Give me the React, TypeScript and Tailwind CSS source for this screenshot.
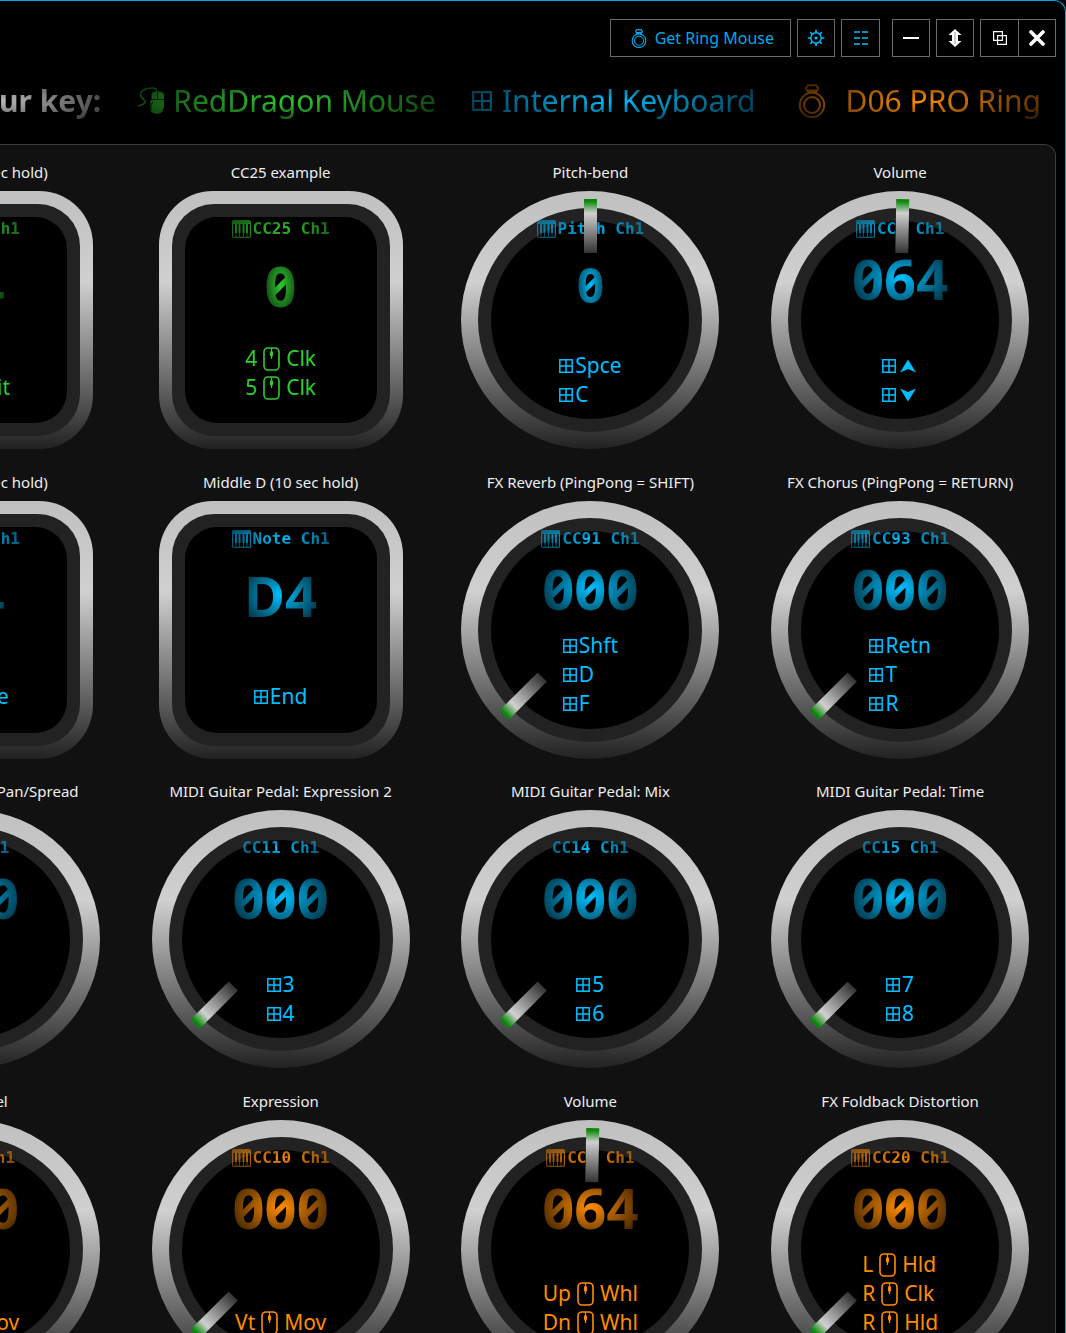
import type { ReactNode } from 'react';
import clsx from 'clsx';

type Tone = 'green' | 'blue' | 'orange';

type Binding = { device: 'key'; text: string } | { device: 'mouse'; button: string; text: string } | { device: 'arrow'; dir: 'up' | 'down' };

type Control = {
  title: string;
  shape: 'knob' | 'pad';
  tone: Tone;
  piano?: boolean;
  label: string;
  value: string;
  small?: boolean;
  angle?: number;
  bindings: Binding[];
};

const TONES: Record<Tone, string> = {
  green: 'text-[#2fcb2f]',
  blue: 'text-[#00bfff]',
  orange: 'text-[#ff8c00]',
};

const key = (text: string): Binding => ({ device: 'key', text });
const mouse = (button: string, text: string): Binding => ({ device: 'mouse', button, text });

const CONTROLS: Control[] = [
  { title: 'Middle C (10 sec hold)', shape: 'pad', tone: 'green', piano: true, label: 'Note Ch1', value: 'C4', bindings: [mouse('Rt', 'Hit')] },
  { title: 'CC25 example', shape: 'pad', tone: 'green', piano: true, label: 'CC25 Ch1', value: '0', bindings: [mouse('4', 'Clk'), mouse('5', 'Clk')] },
  { title: 'Pitch-bend', shape: 'knob', tone: 'blue', piano: true, label: 'Pitch Ch1', value: '0', small: true, angle: 0, bindings: [key('Spce'), key('C')] },
  { title: 'Volume', shape: 'knob', tone: 'blue', piano: true, label: 'CC7 Ch1', value: '064', bindings: [{ device: 'arrow', dir: 'up' }, { device: 'arrow', dir: 'down' }] },

  { title: 'Middle C (10 sec hold)', shape: 'pad', tone: 'blue', piano: true, label: 'Note Ch1', value: 'C4', bindings: [key('Home')] },
  { title: 'Middle D (10 sec hold)', shape: 'pad', tone: 'blue', piano: true, label: 'Note Ch1', value: 'D4', bindings: [key('End')] },
  { title: 'FX Reverb (PingPong = SHIFT)', shape: 'knob', tone: 'blue', piano: true, label: 'CC91 Ch1', value: '000', bindings: [key('Shft'), key('D'), key('F')] },
  { title: 'FX Chorus (PingPong = RETURN)', shape: 'knob', tone: 'blue', piano: true, label: 'CC93 Ch1', value: '000', bindings: [key('Retn'), key('T'), key('R')] },

  { title: 'MIDI Guitar Pedal: Pan/Spread', shape: 'knob', tone: 'blue', label: 'CC10 Ch1', value: '000', bindings: [key('1'), key('2')] },
  { title: 'MIDI Guitar Pedal: Expression 2', shape: 'knob', tone: 'blue', label: 'CC11 Ch1', value: '000', bindings: [key('3'), key('4')] },
  { title: 'MIDI Guitar Pedal: Mix', shape: 'knob', tone: 'blue', label: 'CC14 Ch1', value: '000', bindings: [key('5'), key('6')] },
  { title: 'MIDI Guitar Pedal: Time', shape: 'knob', tone: 'blue', label: 'CC15 Ch1', value: '000', bindings: [key('7'), key('8')] },

  { title: 'Modwheel', shape: 'knob', tone: 'orange', piano: true, label: 'CC1 Ch1', value: '000', bindings: [mouse('Hz', 'Mov')] },
  { title: 'Expression', shape: 'knob', tone: 'orange', piano: true, label: 'CC10 Ch1', value: '000', bindings: [mouse('Vt', 'Mov')] },
  { title: 'Volume', shape: 'knob', tone: 'orange', piano: true, label: 'CC7 Ch1', value: '064', bindings: [mouse('Up', 'Whl'), mouse('Dn', 'Whl')] },
  { title: 'FX Foldback Distortion', shape: 'knob', tone: 'orange', piano: true, label: 'CC20 Ch1', value: '000', bindings: [mouse('L', 'Hld'), mouse('R', 'Clk'), mouse('R', 'Hld')] },
];

const RingIcon = ({ className }: { className?: string }) => (
  <svg viewBox="0 0 28 34" fill="none" stroke="currentColor" strokeWidth="2" className={className}>
    <circle cx="14" cy="21" r="12.2" />
    <circle cx="14" cy="21" r="8" />
    <path d="M10 9.5V7.5h8v2" />
    <path d="M9 6.5 7.8 4.2 10 1.2h8l2.2 3L19 6.5z" />
  </svg>
);

const GridIcon = ({ className }: { className?: string }) => (
  <svg viewBox="0 0 14 14" fill="none" stroke="currentColor" strokeWidth="1.5" className={className}>
    <path d="M.8.8h12.4v12.4H.8zM7 .8v12.4M.8 7h12.4" />
  </svg>
);

const PianoIcon = () => (
  <svg viewBox="0 0 19 18" className="h-[18px] w-[19px]">
    <rect x=".6" y=".6" width="17.8" height="16.8" rx="1" fill="none" stroke="currentColor" strokeWidth="1.2" />
    <path d="M1 1h17v3H1z" fill="currentColor" />
    <path d="M4 3v10M7.5 3v10M11.5 3v10M15 3v10" stroke="currentColor" strokeWidth="2" />
    <path d="M4 12v5M7.5 12v5M11.5 12v5M15 12v5" stroke="currentColor" strokeWidth=".8" />
  </svg>
);

const MouseIcon = () => (
  <svg viewBox="0 0 17 24" fill="none" stroke="currentColor" className="h-6 w-[17px]">
    <rect x="1" y="1" width="15" height="22" rx="4" strokeWidth="1.6" />
    <path d="M8.5 1v11" strokeWidth="1.2" />
    <path d="M8.5 3.5c2 1 2 4.500.8 6.200h-1.600c-1.200-1.700-1.200-5.200.8-6.200z" fill="currentColor" stroke="none" />
  </svg>
);

const WiredMouseIcon = () => (
  <svg viewBox="0 0 28 28" className="size-7">
    <path d="M1 19c4-1 8-3 7-5S3 11 3.500 7 11 1 15 1s5 1.500 5 4" fill="none" stroke="currentColor" strokeWidth="1.4" />
    <path d="M14.500 12V8c0-2 1.500-3.500 4-3.500h1.800V12zM21 12V4.500h1.500c2.500 0 4 1.500 4.500 3.500v4zM13.500 12.700H27V18c0 5-2.500 9-6.500 9-5 0-8.500-3-7.500-8z" fill="currentColor" />
    <path d="M16 15c-2 2-3 5-1.500 8" fill="none" stroke="#000" strokeWidth="1" />
  </svg>
);

const ArrowHead = ({ dir }: { dir: 'up' | 'down' }) => (
  <svg viewBox="0 0 16 14" className={clsx('mx-0.5 h-[14px] w-4', dir === 'down' && 'rotate-180')}>
    <path d="M8 .5 16 13.500 8 10 0 13.500z" fill="currentColor" />
  </svg>
);

const BindingLine = ({ binding }: { binding: Binding }) => {
  if (binding.device === 'mouse') {
    return (
      <li className="flex h-[29px] items-center gap-1.5">
        {binding.button}
        <MouseIcon />
        {binding.text}
      </li>
    );
  }
  return (
    <li className="flex h-[29px] items-center gap-0.5">
      <GridIcon className="size-[14px]" />
      {binding.device === 'arrow' ? <ArrowHead dir={binding.dir} /> : binding.text}
    </li>
  );
};

const Pointer = ({ angle }: { angle: number }) => (
  <div className="absolute inset-0 flex items-start justify-center pt-2" style={{ transform: `rotate(${angle}deg)` }}>
    <div className="h-[54px] w-[13px] bg-[linear-gradient(#0a870a_4%,#d0d0d0_26%,#333_100%)]" />
  </div>
);

const ControlCell = ({ control }: { control: Control }) => {
  const { title, shape, tone, piano, label, value, small, bindings } = control;
  const knob = shape === 'knob';
  const angle = control.angle ?? -135 + (Number(value) / 127) * 270;

  return (
    <section className="flex flex-col items-center">
      <h2 className="h-[31px] text-[15px] leading-6 whitespace-nowrap text-[#eee]">{title}</h2>
      <div
        className={clsx(
          'relative h-[258px] bg-[linear-gradient(#c0c0c0,#d0d0d0_35%,#222)]',
          knob ? 'w-[258px] rounded-full p-[17px]' : 'w-[244px] rounded-[54px] p-[13px]',
        )}
      >
        <div className={clsx('h-full bg-[#222] p-[13px]', knob ? 'rounded-full' : 'rounded-[42px]')}>
          <div className={clsx('h-full bg-black', knob ? 'rounded-full' : 'rounded-[32px]')} />
        </div>

        <div className={clsx('absolute inset-0 flex flex-col items-center pt-7', knob ? 'pb-10' : 'pb-[47px]', TONES[tone])}>
          <div className="flex h-5 items-center gap-0.5 font-['DejaVu_Sans_Mono',monospace] text-base font-bold whitespace-nowrap [mask-image:radial-gradient(ellipse,#000,rgb(0_0_0/0.35))]">
            {piano && <PianoIcon />}
            {label}
          </div>
          <div
            className={clsx(
              'font-bold slashed-zero [mask-image:radial-gradient(ellipse,#000,rgb(0_0_0/0.1))]',
              small ? 'text-5xl leading-[60px]' : 'text-[56px] leading-[60px]',
              knob && !small ? 'mt-[9px]' : 'mt-4',
            )}
          >
            {value}
          </div>
          <ul className="mt-auto text-[21px]">
            {bindings.map((binding, i) => (
              <BindingLine key={i} binding={binding} />
            ))}
          </ul>
        </div>

        {knob && <Pointer angle={angle} />}
      </div>
    </section>
  );
};

const ToolButton = ({ label, className, children }: { label?: string; className?: string; children: ReactNode }) => (
  <button
    type="button"
    aria-label={label}
    className={clsx('flex h-[38px] items-center justify-center border border-[#6b6b6b] bg-black', className)}
  >
    {children}
  </button>
);

const Toolbar = () => (
  <div className="flex justify-end pr-[9px]">
    <ToolButton className="mr-1.5 gap-2 pr-4 pl-5 text-base text-[#00a8e8]">
      <RingIcon className="h-[19px] w-4" />
      Get Ring Mouse
    </ToolButton>
    <ToolButton label="Settings" className="mr-1.5 w-[38px] text-[#00bfff]">
      <svg viewBox="0 0 18 18" fill="none" stroke="currentColor" className="size-[18px]">
        <circle cx="9" cy="9" r="5.2" strokeWidth="1.4" />
        <circle cx="9" cy="9" r="1.6" fill="currentColor" stroke="none" />
        <path d="M9 .8v3M9 14.2v3M.8 9h3M14.2 9h3M3.200 3.200l2 2M12.800 12.800l2 2M3.200 14.800l2-2M12.800 5.200l2-2" strokeWidth="1.6" />
      </svg>
    </ToolButton>
    <ToolButton label="List" className="mr-3 w-[39px] text-[#00bfff]">
      <svg viewBox="0 0 14 14" stroke="currentColor" strokeWidth="1.6" className="size-[14px]">
        <path d="M0 1h6M8 1h6M0 7h6M8 7h6M0 13h6M8 13h6" />
      </svg>
    </ToolButton>
    <ToolButton label="Minimize" className="mr-1.5 w-[38px] text-white">
      <svg viewBox="0 0 16 16" stroke="currentColor" strokeWidth="2" className="size-4">
        <path d="M0 8h16" />
      </svg>
    </ToolButton>
    <ToolButton label="Fit height" className="mr-1.5 w-[38px] text-white">
      <svg viewBox="0 0 14 18" className="h-[18px] w-[14px]">
        <path d="M7 0 13.500 6H10v6h3.500L7 18 .5 12H4V6H.5z" fill="currentColor" />
        <path d="M7 3v12" stroke="#999" strokeWidth="1" />
      </svg>
    </ToolButton>
    <ToolButton label="Restore" className="w-[39px] text-white">
      <svg viewBox="0 0 14 14" fill="none" stroke="currentColor" strokeWidth="1.2" className="size-[14px]">
        <path d="M.6.6h8.800v8.800H.6zM4.600 4.600h8.800v8.800H4.600z" />
      </svg>
    </ToolButton>
    <ToolButton label="Close" className="-ml-px w-[38px] text-white">
      <svg viewBox="0 0 16 16" stroke="currentColor" strokeWidth="3.6" strokeLinecap="round" className="size-4">
        <path d="m2 2 12 12M14 2 2 14" />
      </svg>
    </ToolButton>
  </div>
);

const LegendItem = ({ tone, icon, name, className }: { tone: Tone; icon: ReactNode; name: string; className?: string }) => (
  <div className={clsx('flex shrink-0 items-center [mask-image:radial-gradient(ellipse,#000,rgb(0_0_0/0.1))]', TONES[tone], className)}>
    {icon}
    <span>{name}</span>
  </div>
);

export default function App() {
  return (
    <div className="bg-black font-['Noto_Sans',sans-serif] text-white">
      <main className="flex h-screen flex-col overflow-hidden rounded-tr-xl border-t border-r border-[#00a8e8] pt-[18px]">
        <Toolbar />

        <div className="mt-[22px] flex h-11 items-center justify-end gap-9 pr-6 text-[30px] leading-[44px] whitespace-nowrap">
          <span className="shrink-0 font-bold text-[#bbb] [mask-image:radial-gradient(ellipse_at_left,#000,transparent_120%)]">ur key:</span>
          <LegendItem tone="green" className="gap-2" icon={<WiredMouseIcon />} name="RedDragon Mouse" />
          <LegendItem tone="blue" className="gap-2.5" icon={<GridIcon className="size-5" />} name="Internal Keyboard" />
          <LegendItem tone="orange" className="ml-1.5 gap-5" icon={<RingIcon className="h-[34px] w-7" />} name="D06 PRO Ring" />
        </div>

        <div className="mt-[21px] mr-[9px] -ml-[184px] grid min-h-[1254px] shrink-0 auto-rows-fr grid-cols-4 rounded-tr-xl border-t border-r border-[#3c3c3c] bg-[#111] pt-[15px]">
          {CONTROLS.map((control, i) => (
            <ControlCell key={i} control={control} />
          ))}
        </div>
      </main>
    </div>
  );
}
